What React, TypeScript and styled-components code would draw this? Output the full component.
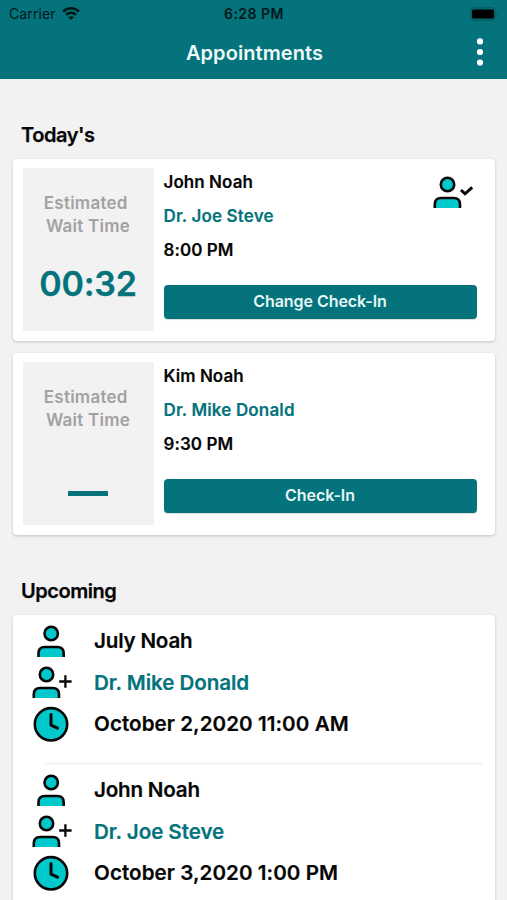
import React from "react";
import styled, { createGlobalStyle } from "styled-components";

const TEAL = "#04737b";
const CYAN = "#00c8cb";

const GlobalStyle = createGlobalStyle`
  * { box-sizing: border-box; }
  body {
    margin: 0;
    background: #f2f2f2;
    color: #060606;
    font-family: Inter, "Liberation Sans", sans-serif;
    font-weight: 600;
    overflow: hidden;
  }
`;

const Screen = styled.div`
  width: 507px;
  height: 900px;
  overflow: hidden;
  background: #f2f2f2;
`;

const Header = styled.header`
  height: 79px;
  background: ${TEAL};
`;

const StatusBar = styled.div`
  display: grid;
  grid-template-columns: 1fr auto 1fr;
  align-items: center;
  height: 27px;
  padding: 0 8px 0 9px;
  color: #02171a;
  font-size: 14px;
`;

const Carrier = styled.div`
  display: flex;
  align-items: center;
  gap: 6px;
  font-weight: 400;
  letter-spacing: 0.1px;
`;

const Clock = styled.div`
  letter-spacing: 0.5px;
`;

const BatterySlot = styled.div`
  display: flex;
  justify-content: flex-end;
`;

const NavBar = styled.div`
  display: grid;
  grid-template-columns: 60px 1fr 60px;
  align-items: center;
  height: 51px;
`;

const Title = styled.h1`
  margin: 0;
  padding-left: 2px;
  color: #eefafa;
  font-size: 20px;
  line-height: 26px;
  font-weight: 600;
  letter-spacing: 0.08px;
  text-align: center;
`;

const MenuButton = styled.button`
  display: flex;
  justify-content: center;
  padding: 0 0 2px 6px;
  border: 0;
  background: none;
`;

const Content = styled.main`
  padding: 0 12px 0 13px;
`;

const SectionTitle = styled.h2`
  margin: 0;
  padding: 44px 0 12px 8px;
  font-size: 20px;
  line-height: 24px;
  font-weight: 600;
  letter-spacing: -0.45px;
  -webkit-text-stroke: 0.25px currentColor;
`;

const Card = styled.section`
  background: #fff;
  border-radius: 4px;
  box-shadow: 0 1px 3px rgba(0, 0, 0, 0.2);
`;

const TodayList = styled.div`
  display: flex;
  flex-direction: column;
  gap: 12px;
`;

const TodayCard = styled(Card)`
  display: flex;
  height: 182px;
  padding: 9px 18.5px 10px 10px;
`;

const WaitPanel = styled.div`
  display: flex;
  flex-direction: column;
  align-items: center;
  width: 131px;
  height: 163px;
  padding: 24px 1px 0 0;
  background: #f2f2f2;
`;

const WaitLabel = styled.div`
  color: #a3a1a1;
  font-size: 17px;
  line-height: 23px;
  letter-spacing: 0.25px;
  text-align: center;
  white-space: pre;
`;

const WaitValue = styled.div`
  margin-top: 24px;
  color: ${TEAL};
  font-size: 34px;
  line-height: 44px;
  letter-spacing: -0.2px;
  -webkit-text-stroke: 0.3px currentColor;
`;

const WaitDash = styled.div`
  width: 40px;
  height: 5px;
  margin-top: 59px;
  background: ${TEAL};
`;

const Details = styled.div`
  display: flex;
  flex: 1;
  flex-direction: column;
  margin-left: 9.5px;
`;

const Summary = styled.div`
  display: flex;
  justify-content: space-between;
  height: 117px;
`;

const Lines = styled.div`
  margin-top: -3px;
`;

const Line = styled.div<{ $accent?: boolean }>`
  color: ${(p) => (p.$accent ? TEAL : "inherit")};
  font-size: 17px;
  line-height: 34px;
  letter-spacing: ${(p) => (p.$accent ? 0.15 : 0.06)}px;
  white-space: nowrap;
  -webkit-text-stroke: 0.15px currentColor;
`;

const CheckButton = styled.button`
  height: 34px;
  padding: 0 0 2px;
  border: 0;
  border-radius: 4px;
  background: ${TEAL};
  box-shadow: 0 1px 1px rgba(0, 0, 0, 0.15);
  color: #e6f7f7;
  font: 600 16px Inter, "Liberation Sans", sans-serif;
  letter-spacing: -0.05px;
`;

const StatusIcon = styled.div`
  padding: 7px 5.5px 0 0;
`;

const UpcomingItem = styled.article`
  height: 149px;
  padding: 5px 13px 0 19px;
`;

const ItemRow = styled.div`
  display: grid;
  grid-template-columns: 38px 1fr;
  column-gap: 24px;
  align-items: center;
  height: 41.5px;
`;

const ItemText = styled.div<{ $accent?: boolean; $spacing?: number }>`
  color: ${(p) => (p.$accent ? TEAL : "inherit")};
  font-size: 20.6px;
  letter-spacing: ${(p) => p.$spacing ?? 0}px;
  white-space: nowrap;
  -webkit-text-stroke: 0.2px currentColor;
`;

const Divider = styled.hr`
  height: 3px;
  margin: 17px 0 0 12px;
  border: 0;
  background: #f5f5f5;
`;

const Icon = styled.svg`
  display: block;
  overflow: visible;
`;

function WifiIcon() {
  return (
    <Icon width="18" height="14" viewBox="0 0 18 14" fill="none" stroke="#02171a" strokeWidth="2.6">
      <path d="M1 4.6C5.7 .2 12.3 .2 17 4.6" />
      <path d="M4 7.8c3-2.7 7-2.7 10 0" />
      <path d="M6.2 10.2c1.7-1.4 3.9-1.4 5.6 0L9 13z" fill="#02171a" stroke="none" />
    </Icon>
  );
}

function BatteryIcon() {
  return (
    <Icon width="29" height="14" viewBox="0 0 29 14">
      <rect x=".8" y=".8" width="24.4" height="12.4" rx="3.4" fill="none" stroke="#035a61" strokeWidth="1.2" />
      <rect x="2" y="2.5" width="22" height="9" rx="1.6" fill="#000" />
      <path d="M27 5c1.3.5 1.3 3.5 0 4z" fill="#035a61" />
    </Icon>
  );
}

function MoreIcon() {
  return (
    <Icon width="8" height="28" viewBox="0 0 8 28" fill="#fff">
      <circle cx="4" cy="3.4" r="3.1" />
      <circle cx="4" cy="14" r="3.1" />
      <circle cx="4" cy="24.6" r="3.1" />
    </Icon>
  );
}

type Badge = "none" | "plus" | "check";

function PersonIcon({ badge = "none" }: { badge?: Badge }) {
  const shift = badge === "none" ? 4.7 : 0;
  return (
    <Icon width="38" height="34" viewBox="0 0 38 34" fill="none" stroke="#080808" strokeWidth="2.6">
      <g transform={`translate(${shift} 0)`}>
        <circle cx="14.5" cy="9.5" r="6.7" fill={CYAN} />
        <path d="M1.8 33v-3.8c0-4 2.5-6.2 6.4-6.2h12.4c3.9 0 6.4 2.2 6.4 6.2V33" fill={CYAN} />
      </g>
      {badge === "plus" && <path d="M27.2 16.5h12.4M33.4 10.3v12.4" strokeWidth="2.3" />}
      {badge === "check" && <path d="M28 15l4 3.8L39.2 12.4" strokeWidth="3" />}
    </Icon>
  );
}

function ClockIcon() {
  return (
    <Icon width="38" height="38" viewBox="0 0 38 38" fill="none" stroke="#080808" strokeWidth="2.6">
      <circle cx="19" cy="19.3" r="16.2" fill={CYAN} />
      <path d="M19 9.5v10.7l6.5 3" strokeWidth="3" strokeLinecap="round" strokeLinejoin="round" />
    </Icon>
  );
}

interface TodayVisit {
  patient: string;
  doctor: string;
  time: string;
  wait?: string;
  action: string;
}

const today: TodayVisit[] = [
  { patient: "John Noah", doctor: "Dr. Joe Steve", time: "8:00 PM", wait: "00:32", action: "Change Check-In" },
  { patient: "Kim Noah", doctor: "Dr. Mike Donald", time: "9:30 PM", action: "Check-In" },
];

const upcoming = [
  { patient: "July Noah", doctor: "Dr. Mike Donald", date: "October 2,2020 11:00 AM" },
  { patient: "John Noah", doctor: "Dr. Joe Steve", date: "October 3,2020 1:00 PM" },
];

export default function App() {
  return (
    <Screen>
      <GlobalStyle />
      <Header>
        <StatusBar>
          <Carrier>
            Carrier
            <WifiIcon />
          </Carrier>
          <Clock>6:28 PM</Clock>
          <BatterySlot>
            <BatteryIcon />
          </BatterySlot>
        </StatusBar>
        <NavBar>
          <span />
          <Title>Appointments</Title>
          <MenuButton aria-label="More">
            <MoreIcon />
          </MenuButton>
        </NavBar>
      </Header>
      <Content>
        <SectionTitle>Today's</SectionTitle>
        <TodayList>
          {today.map((visit) => (
            <TodayCard key={visit.patient}>
              <WaitPanel>
                <WaitLabel>{"Estimated \nWait Time"}</WaitLabel>
                {visit.wait ? <WaitValue>{visit.wait}</WaitValue> : <WaitDash />}
              </WaitPanel>
              <Details>
                <Summary>
                  <Lines>
                    <Line>{visit.patient}</Line>
                    <Line $accent>{visit.doctor}</Line>
                    <Line>{visit.time}</Line>
                  </Lines>
                  {visit.wait && (
                    <StatusIcon>
                      <PersonIcon badge="check" />
                    </StatusIcon>
                  )}
                </Summary>
                <CheckButton>{visit.action}</CheckButton>
              </Details>
            </TodayCard>
          ))}
        </TodayList>
        <SectionTitle>Upcoming</SectionTitle>
        <Card>
          {upcoming.map((visit) => (
            <UpcomingItem key={visit.date}>
              <ItemRow>
                <PersonIcon />
                <ItemText $spacing={-0.2}>{visit.patient}</ItemText>
              </ItemRow>
              <ItemRow>
                <PersonIcon badge="plus" />
                <ItemText $accent $spacing={-0.07}>{visit.doctor}</ItemText>
              </ItemRow>
              <ItemRow>
                <ClockIcon />
                <ItemText $spacing={0.05}>{visit.date}</ItemText>
              </ItemRow>
              <Divider />
            </UpcomingItem>
          ))}
        </Card>
      </Content>
    </Screen>
  );
}
